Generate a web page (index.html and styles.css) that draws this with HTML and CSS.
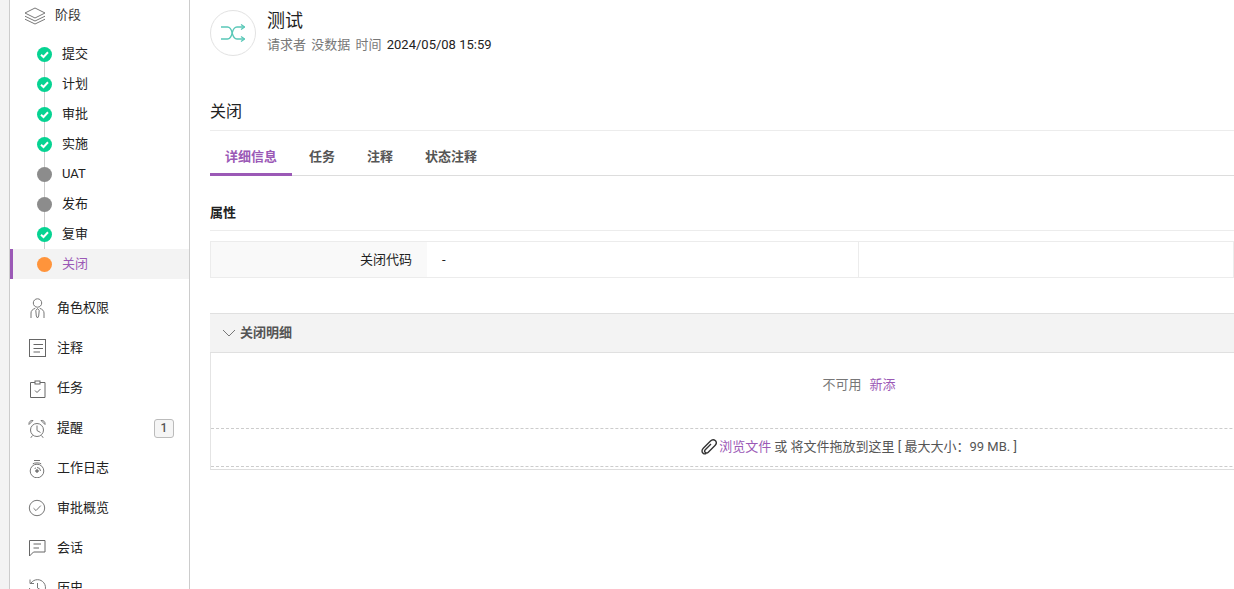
FILE: index.html
```html
<!DOCTYPE html>
<html lang="zh-CN">
<head>
<meta charset="utf-8">
<title>测试</title>
<link rel="stylesheet" href="styles.css">
</head>
<body>
<div class="page">
  <aside class="sidebar">
    <div class="stage-head">
      <svg class="ico-layers" viewBox="0 0 22 18" width="22" height="18" fill="none" stroke="#777" stroke-width="1"><path d="M11 1 21 6 11 11 1 6Z"/><path d="M1 9.200 11 14 21 9.200"/><path d="M1 12.200 11 17 21 12.200"/></svg>
      <span>阶段</span>
    </div>
    <ul class="stages">
      <li class="stage"><span class="dot done"><svg viewBox="0 0 15 15" width="15" height="15" fill="none" stroke="#fff" stroke-width="2"><path d="M4 7.700 6.500 10 11 5.300"/></svg></span>提交</li>
      <li class="stage"><span class="dot done"><svg viewBox="0 0 15 15" width="15" height="15" fill="none" stroke="#fff" stroke-width="2"><path d="M4 7.700 6.500 10 11 5.300"/></svg></span>计划</li>
      <li class="stage"><span class="dot done"><svg viewBox="0 0 15 15" width="15" height="15" fill="none" stroke="#fff" stroke-width="2"><path d="M4 7.700 6.500 10 11 5.300"/></svg></span>审批</li>
      <li class="stage"><span class="dot done"><svg viewBox="0 0 15 15" width="15" height="15" fill="none" stroke="#fff" stroke-width="2"><path d="M4 7.700 6.500 10 11 5.300"/></svg></span>实施</li>
      <li class="stage"><span class="dot idle"></span>UAT</li>
      <li class="stage"><span class="dot idle"></span>发布</li>
      <li class="stage"><span class="dot done"><svg viewBox="0 0 15 15" width="15" height="15" fill="none" stroke="#fff" stroke-width="2"><path d="M4 7.700 6.500 10 11 5.300"/></svg></span>复审</li>
      <li class="stage current"><span class="dot now"></span>关闭</li>
    </ul>
    <nav class="nav">
      <a class="nav-item"><svg viewBox="0 0 18 20" width="18" height="20" fill="none" stroke="#777"><circle cx="8.500" cy="5" r="4.200"/><path d="M2 20V15C2 12.800 3.500 11.300 6.300 10.300"/><path d="M15 20V15C15 12.800 13.500 11.300 10.700 10.300"/><path d="M8.500 10.500 6.800 12.500 7.300 18 8.500 20 9.700 18 10.200 12.500Z"/></svg><span>角色权限</span></a>
      <a class="nav-item"><svg viewBox="0 0 18 18" width="18" height="18" fill="none" stroke="#666"><rect x=".5" y=".5" width="16" height="17"/><path d="M4.500 5.500H14M4.500 9.500H14M4.500 13H11"/></svg><span>注释</span></a>
      <a class="nav-item"><svg viewBox="0 0 18 20" width="18" height="20" fill="none" stroke="#666"><path d="M6 4.500H1.500V19.500H16V4.500H11"/><rect x="6" y="3" width="5" height="3"/><path d="M6 12.500 8 14.500 11.500 11"/></svg><span>任务</span></a>
      <a class="nav-item"><svg viewBox="0 0 20 20" width="20" height="20" fill="none" stroke="#777"><circle cx="9" cy="12" r="6.500"/><path d="M9 7.500V12.500L12.500 14.500"/><path d="M1 6.500C.5 4 2.500 2 5 2.500Z"/><path d="M17 6.500C17.500 4 15.500 2 13 2.500Z"/><path d="M4.500 17.500 2.800 19.800M13.500 17.500 15.200 19.800"/></svg><span>提醒</span><b class="badge">1</b></a>
      <a class="nav-item"><svg viewBox="0 0 18 20" width="18" height="20" fill="none" stroke="#777"><circle cx="8" cy="13" r="6.800"/><path d="M5 2.500H11M3.800 5.800C5 4.600 11 4.600 12.200 5.800"/><circle cx="8" cy="13" r="1.300" fill="#777"/><path d="M8 9.500A3.500 3.500 0 0 1 11.500 13"/><path d="M5.500 11A3 3 0 0 1 7 9.800"/></svg><span>工作日志</span></a>
      <a class="nav-item"><svg viewBox="0 0 18 18" width="18" height="18" fill="none" stroke="#777"><circle cx="8" cy="9" r="7.700"/><path d="M4.500 9.200 7 11.600 11.800 6.600"/></svg><span>审批概览</span></a>
      <a class="nav-item"><svg viewBox="0 0 18 18" width="18" height="18" fill="none" stroke="#666"><path d="M.5 1.500H16V13H4.500L.5 17Z"/><path d="M4.500 5H12M4.500 9H10"/></svg><span>会话</span></a>
      <a class="nav-item"><svg viewBox="0 0 20 20" width="20" height="20" fill="none" stroke="#777"><path d="M3 5A8 8 0 1 1 1.500 10"/><path d="M2 1.500V5.500H6"/><path d="M9.500 5V10L13 12"/></svg><span>历史</span></a>
    </nav>
  </aside>
  <main class="main">
    <header class="head">
      <div class="head-icon"><svg viewBox="0 0 24 18" width="24" height="18" fill="none" stroke="#5ac8b8" stroke-width="1.300"><path d="M0 3H6.500C9.500 3 10.500 6 11.200 9S13 15 16 15H23.500"/><path d="M0 15H6.500C9.500 15 10.500 12 11.200 9S13 3 16 3H23.500"/><path d="M20 .5 23.500 3 20 5.500M20 12.500 23.500 15 20 17.500"/></svg></div>
      <div class="head-text">
        <h1>测试</h1>
        <p><span class="muted">请求者</span> <span class="muted">没数据</span> <span class="muted">时间</span> <span class="time">2024/05/08 15:59</span></p>
      </div>
    </header>
    <h2 class="section-title">关闭</h2>
    <div class="tabs">
      <a class="tab active">详细信息</a>
      <a class="tab">任务</a>
      <a class="tab">注释</a>
      <a class="tab">状态注释</a>
    </div>
    <h3 class="props-title">属性</h3>
    <div class="props">
      <div class="prop-label">关闭代码</div>
      <div class="prop-value">-</div>
      <div class="prop-rest"></div>
    </div>
    <section class="panel">
      <div class="panel-head">
        <svg viewBox="0 0 14 8" width="14" height="8" fill="none" stroke="#777"><path d="M1 1 7 7 13 1"/></svg>
        <span>关闭明细</span>
      </div>
      <div class="panel-empty"><span class="na">不可用</span><a class="link">新添</a></div>
      <div class="drop">
        <svg viewBox="0 0 16 16" width="16" height="16" fill="none" stroke="#333" stroke-width="1.400"><path d="M5 14.500C3 15.500 1 14 1 12C1 11 1.500 10 2.500 9L9.500 2C11 .5 13 .5 14.500 1.800C15.500 3 15.500 5 14 6.500L7 13.500C6 14.500 4.500 14 4 13.200C3.500 12.500 3.500 11.500 4.500 10.500L10 5"/></svg>
        <span><a class="link">浏览文件</a> 或 将文件拖放到这里 [ 最大大小：99 MB. ]</span>
      </div>
    </section>
  </main>
</div>
</body>
</html>
```
FILE: styles.css
```css
* { box-sizing: border-box; }
html, body { margin: 0; height: 589px; overflow: hidden; background: #fff; }
body { font-family: Roboto, "Noto Sans CJK SC", sans-serif; font-size: 13px; line-height: 18px; color: #222; }
h1, h2, h3, p, ul { margin: 0; padding: 0; }
ul { list-style: none; }
.page { display: flex; height: 589px; overflow: hidden; padding-left: 9px; background: linear-gradient(#f3f3f3, #f3f3f3) left / 9px 100% no-repeat; }
.sidebar { width: 181px; flex: none; height: 640px; border-left: 1px solid #ccc; border-right: 1px solid #ccc; background: #fff; }
.stage-head { display: flex; align-items: center; height: 39px; padding: 0 0 8px 14px; color: #333; }
.stage-head span { margin-bottom: 2px; }
.ico-layers { margin-right: 9px; }
.stages { margin-bottom: 9px; }
.stage { position: relative; display: flex; align-items: center; height: 30px; padding-left: 27px; color: #222; }
.stage::before { content: ""; position: absolute; left: 34px; top: 15px; height: 30px; width: 1px; background: #ccc; }
.stage:last-child::before { display: none; }
.stage.current { background: #f3f3f3; color: #9b59b6; box-shadow: inset 3px 0 0 #9b59b6; }
.dot { position: relative; z-index: 1; flex: none; display: flex; align-items: center; justify-content: center; width: 15px; height: 15px; border-radius: 50%; margin-right: 10px; }
.dot.done { background: #06d392; }
.dot.idle { background: #8c8c8c; }
.dot.now { background: #ff943b; }
.nav-item { display: flex; align-items: center; height: 40px; padding: 0 15px 0 18px; color: #222; }
.nav-item svg { flex: none; width: 20px; margin-right: 9px; }
.badge { margin-left: auto; width: 20px; height: 19px; border: 1px solid #bbb; border-radius: 3px; background: #f5f5f5; font-weight: 500; font-size: 12px; text-align: center; line-height: 17px; color: #555; }
.main { flex: 1; min-width: 0; padding-left: 20px; overflow: hidden; }
.head { display: flex; align-items: flex-start; padding-top: 10px; height: 92px; }
.head-icon { flex: none; width: 46px; height: 46px; border: 1px solid #e2e2e2; border-radius: 50%; display: flex; align-items: center; justify-content: center; margin-right: 11px; }
.head-text { margin-top: -1px; }
.head-text h1 { font-size: 18px; font-weight: 400; line-height: 24px; color: #222; }
.head-text p { line-height: 18px; margin-top: 3px; word-spacing: 2px; }
.muted { color: #777; }
.time { color: #222; word-spacing: 0; }
.section-title { font-size: 16px; font-weight: 400; line-height: 24px; padding: 8px 0 6px; height: 39px; border-bottom: 1px solid #ececec; color: #222; }
.tabs { display: flex; height: 45px; border-bottom: 1px solid #ddd; }
.tab { display: flex; align-items: center; height: 44px; padding: 7px 16px 0; font-weight: 700; color: #555; }
.tab.active { color: #9b59b6; height: 45px; border-bottom: 3px solid #9b59b6; padding: 9px 0 0 0; width: 82px; margin-right: 1px; justify-content: center; flex: none; }
.props-title { font-size: 13px; font-weight: 700; line-height: 20px; padding: 27px 0 7px; height: 55px; border-bottom: 1px solid #ececec; color: #222; }
.props { display: flex; height: 37px; margin-top: 10px; border: 1px solid #ececec; line-height: 35px; }
.prop-label { width: 216px; flex: none; background: #f9f9f9; text-align: right; padding-right: 15px; }
.prop-value { width: 432px; flex: none; padding-left: 15px; border-right: 1px solid #ececec; }
.prop-rest { flex: 1; }
.panel { width: 1297px; margin-top: 35px; border-left: 1px solid #e4e4e4; border-bottom: 1px solid #ddd; height: 157px; }
.panel-head { display: flex; align-items: center; height: 40px; margin-left: -1px; padding-left: 12px; background: #f3f3f3; border-top: 1px solid #e0e0e0; border-bottom: 1px solid #e0e0e0; color: #555; font-weight: 700; }
.panel-head svg { margin-right: 4px; }
.panel-empty { height: 75px; display: flex; align-items: center; justify-content: center; padding: 0 0 11px 0; color: #777; }
.na { margin-right: 8px; }
.link { color: #9b59b6; }
.drop { height: 39px; display: flex; align-items: center; justify-content: center; gap: 2px; padding-bottom: 2px; border-top: 1px dashed #ccc; border-bottom: 1px dashed #ccc; color: #555; }
```
